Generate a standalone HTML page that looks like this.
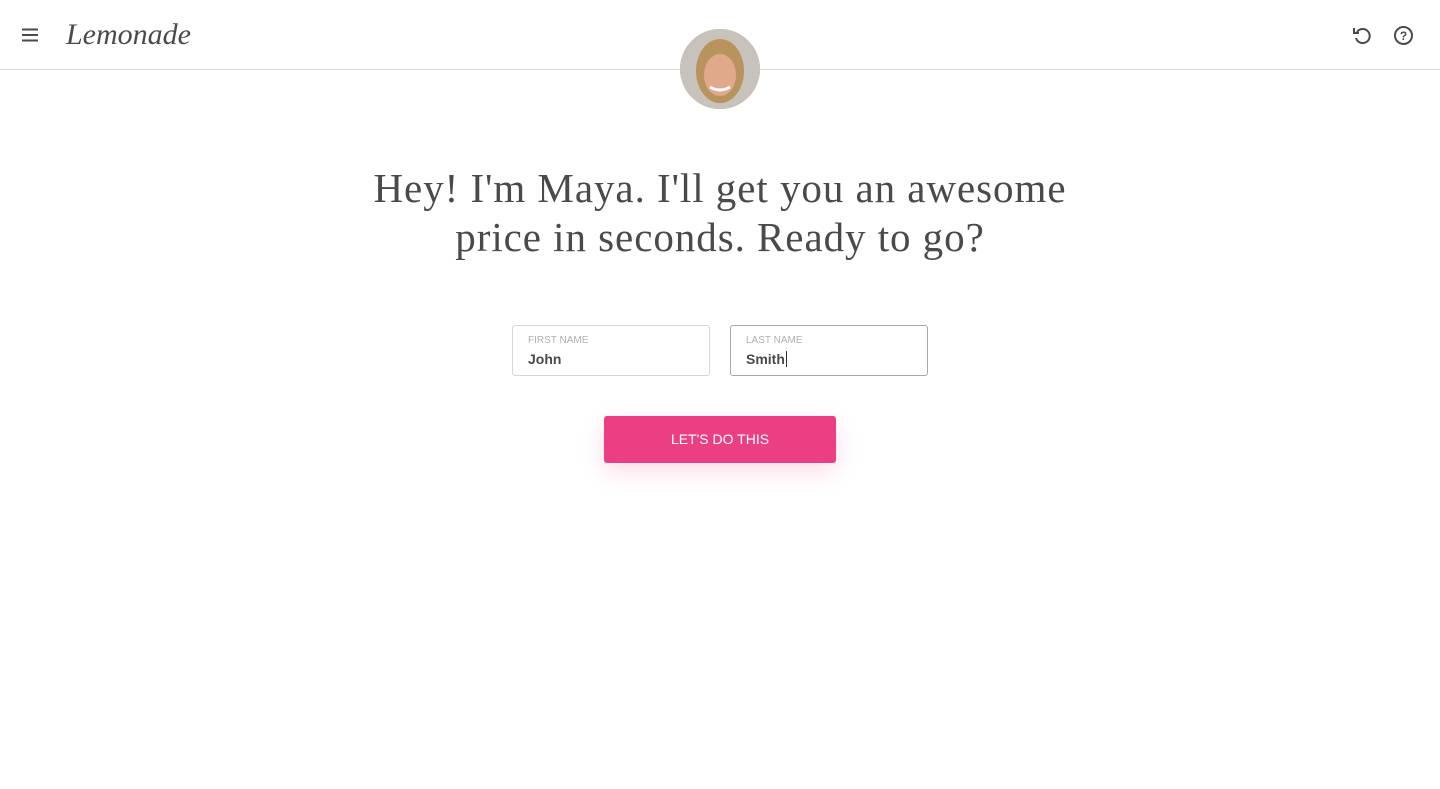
<!DOCTYPE html>
<html><head><style>
body{margin:0;width:1440px;height:789px;background:#fff;font-family:"Liberation Sans",sans-serif;overflow:hidden;position:relative}
.hdr{position:absolute;left:0;top:0;width:1440px;height:69px;border-bottom:1px solid #d9d9d9}
.logo{position:absolute;left:66px;top:18px;font-family:"Liberation Serif",serif;font-style:italic;font-size:30px;color:#4a4a4a;letter-spacing:0px}
.av{position:absolute;left:680px;top:29px;width:80px;height:80px;border-radius:50%;overflow:hidden;background:#b8a58a}
h1{position:absolute;left:0;top:164px;width:1440px;margin:0;text-align:center;font-family:"Liberation Serif",serif;font-weight:normal;font-size:41px;line-height:49px;color:#4a4a4a;letter-spacing:0.95px}
.f{position:absolute;top:325px;width:196px;height:49px;border:1px solid #d6d6d6;border-radius:3px;box-sizing:content-box}
.f .l{position:absolute;left:15px;top:9px;font-size:10px;color:#b0b0b0}
.f .v{position:absolute;left:15px;top:25px;font-size:14px;font-weight:bold;color:#4a4a4a}
.cur{display:inline-block;width:1px;height:16px;background:#333;vertical-align:-3px;margin-left:1px}
.btn{position:absolute;left:604px;top:416px;width:232px;height:47px;background:#ec3f83;border-radius:3px;color:#fff;font-size:14px;text-align:center;line-height:47px;box-shadow:0 8px 24px rgba(236,63,131,0.18)}
</style></head><body>
<div class="hdr">
<svg style="position:absolute;left:22px;top:28px" width="16" height="14"><path d="M0 1.5h16M0 7h16M0 12.5h16" stroke="#4a4a4a" stroke-width="2"/></svg>
<div class="logo">Lemonade</div>
<svg style="position:absolute;left:1352px;top:25px" width="22" height="22" viewBox="0 0 22 22" fill="none" stroke="#4a4a4a" stroke-width="2"><path d="M5 7A7 7 0 1 1 4 13"/><path d="M2 3v5h5" /></svg>
<svg style="position:absolute;left:1393px;top:25px" width="21" height="21" viewBox="0 0 21 21"><circle cx="10.5" cy="10.5" r="8.5" fill="none" stroke="#4a4a4a" stroke-width="2"/><text x="10.5" y="15" text-anchor="middle" font-size="12" font-weight="bold" fill="#4a4a4a" font-family="Liberation Sans">?</text></svg>
</div>
<div class="av"><svg width="80" height="80"><rect width="80" height="80" fill="#c7c2bb"/><ellipse cx="40" cy="42" rx="24" ry="32" fill="#b8935e"/><ellipse cx="40" cy="46" rx="16" ry="21" fill="#e0a98a"/><path d="M30 58q10 6 20 0" stroke="#fff" stroke-width="3" fill="none"/></svg></div>
<h1>Hey! I'm Maya. I'll get you an awesome<br>price in seconds. Ready to go?</h1>
<div class="f" style="left:512px"><div class="l">FIRST NAME</div><div class="v">John</div></div>
<div class="f" style="left:730px;border-color:#a8a8a8"><div class="l">LAST NAME</div><div class="v">Smith<span class="cur"></span></div></div>
<div class="btn">LET'S DO THIS</div>
</body></html>
